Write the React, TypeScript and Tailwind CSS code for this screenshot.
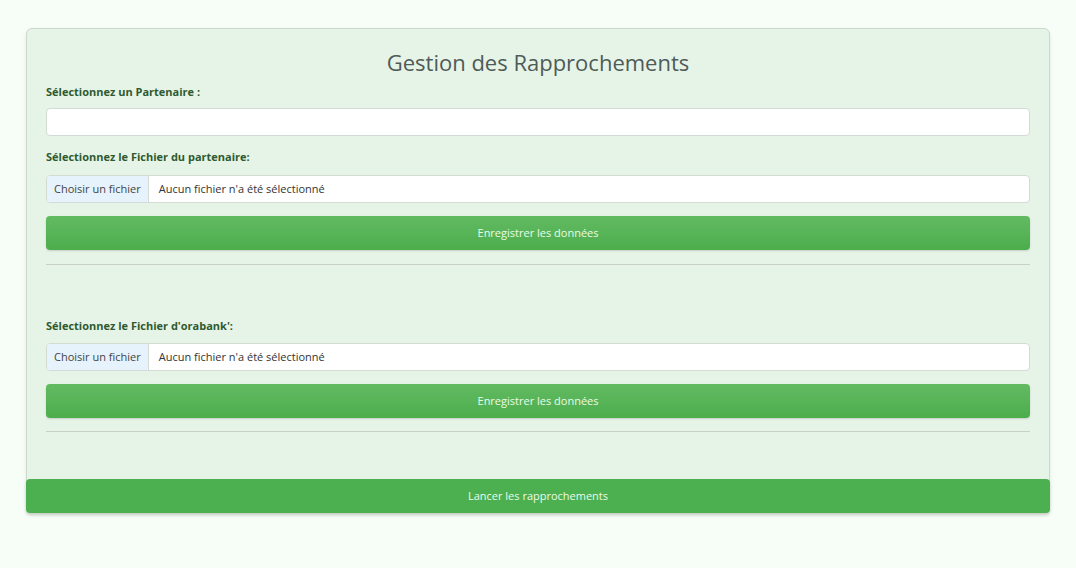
import React from 'react';

const FileField = () => {
    return (
        <div className="flex h-[28px] w-full items-stretch rounded-[4px] border border-[#d4dad4] bg-white overflow-hidden">
            <span className="flex items-center border-r border-[#d4dad4] bg-[#e6f3fc] px-[7px] text-[11px] text-[#444]">Choisir un fichier</span>
            <span className="flex items-center pl-[10px] text-[11px] text-[#333]">Aucun fichier n'a été sélectionné</span>
        </div>
    );
};

const SaveButton = () => {
    return (
        <button
            type="button"
            className="mt-[13px] h-[34px] w-full rounded-[4px] bg-gradient-to-b from-[#62bb62] to-[#4cad4c] text-[11px] text-[#eafbea] shadow-[0_1px_2px_rgba(0,0,0,0.15)]"
        >
            Enregistrer les données
        </button>
    );
};

const App = () => {
    return (
        <div className="min-h-screen bg-[#f7fdf7] px-[26px] pt-[28px] font-['Open_Sans',sans-serif]">
            <div className="flex flex-col rounded-[6px] border border-[#cdd8cd] bg-[#e6f4e8] shadow-[0_2px_4px_rgba(0,0,0,0.08)]">
                <div className="px-[19px] pt-[16px]">
                    <h1 className="text-center text-[22px] leading-[35px] text-[#4f5b57]">Gestion des Rapprochements</h1>
                    <label className="mt-[3px] block text-[11px] font-bold leading-[18px] text-[#2f5a2f]">Sélectionnez un Partenaire :</label>
                    <input
                        type="text"
                        className="mt-[7px] block h-[28px] w-full rounded-[4px] border border-[#d4dad4] bg-white"
                    />
                    <label className="mt-[12px] block text-[11px] font-bold leading-[18px] text-[#2f5a2f]">Sélectionnez le Fichier du partenaire:</label>
                    <div className="mt-[9px]">
                        <FileField />
                    </div>
                    <SaveButton />
                    <hr className="mt-[14px] border-t border-[#c8d0c8]" />

                    <label className="mt-[52px] block text-[11px] font-bold leading-[18px] text-[#2f5a2f]">Sélectionnez le Fichier d'orabank':</label>
                    <div className="mt-[8px]">
                        <FileField />
                    </div>
                    <SaveButton />
                    <hr className="mt-[13px] border-t border-[#c8d0c8]" />
                </div>
                <button
                    type="button"
                    className="-mx-px -mb-px mt-[47px] h-[34px] rounded-[4px] bg-[#4caf50] text-[11px] text-[#eafbea] shadow-[0_2px_3px_rgba(0,0,0,0.15)]"
                >
                    Lancer les rapprochements
                </button>
            </div>
        </div>
    );
};

export default App;
